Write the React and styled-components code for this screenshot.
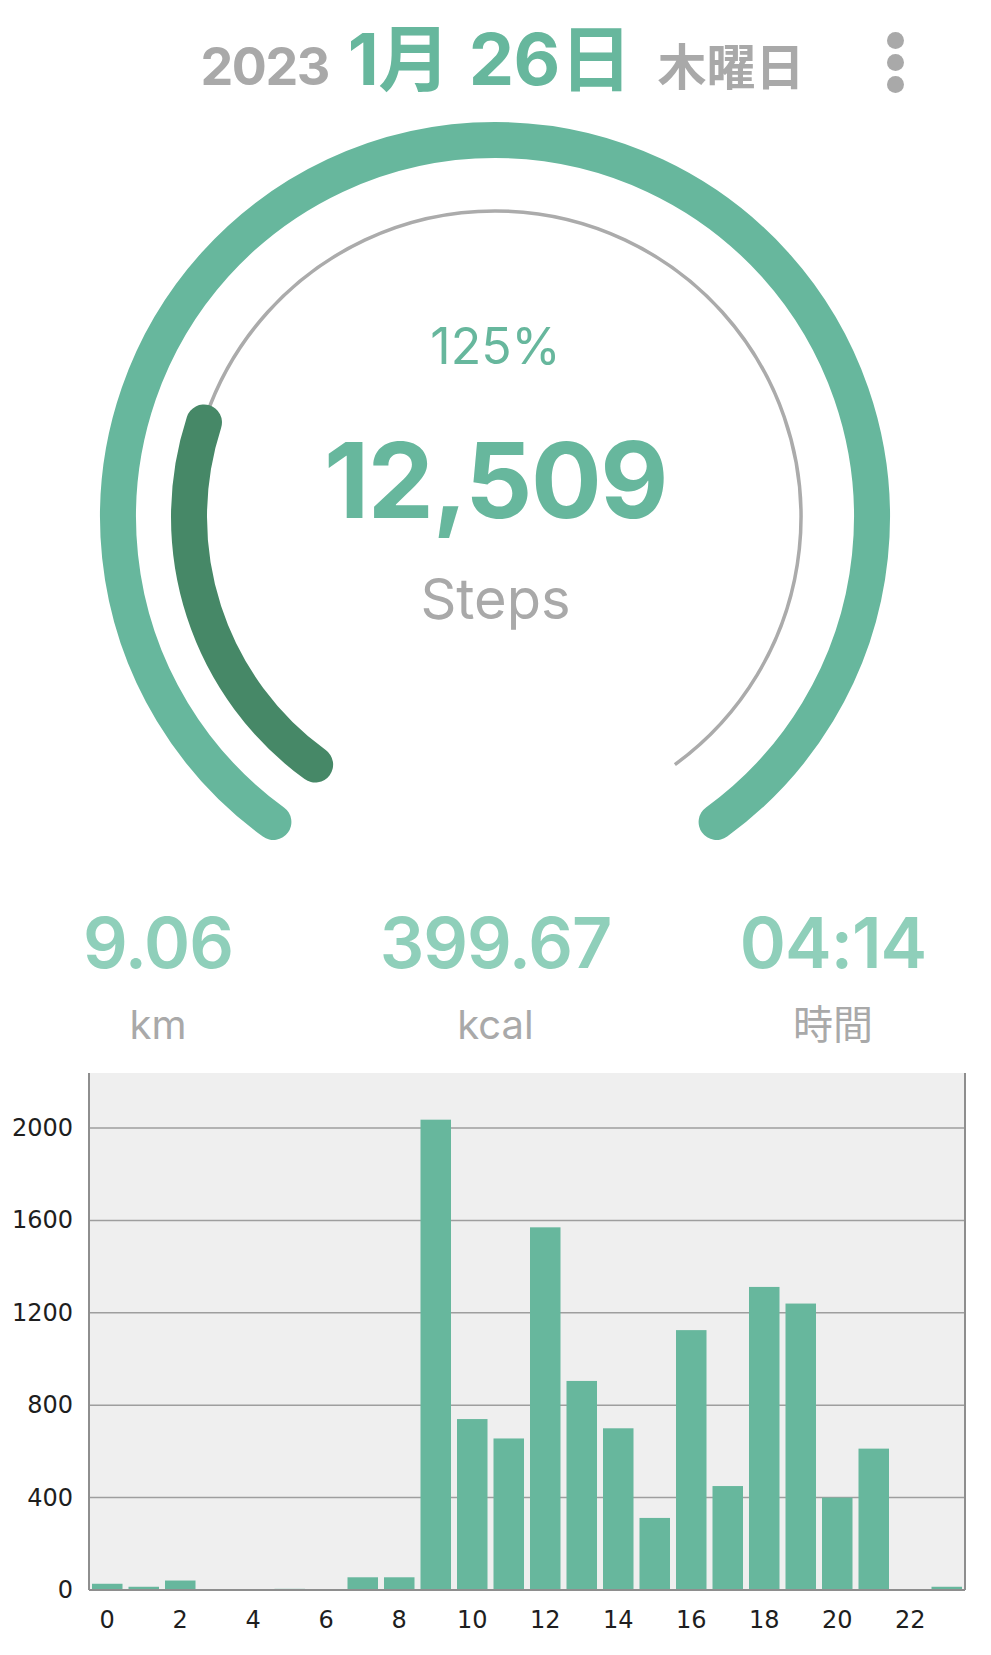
import React from 'react';
import styled, { createGlobalStyle } from 'styled-components';

const GlobalStyle = createGlobalStyle`
  html, body {
    margin: 0;
    padding: 0;
    background: #ffffff;
  }
  body {
    font-family: Inter, "Noto Sans", "Noto Sans CJK JP", sans-serif;
  }
`;

const GREEN = '#67b79d';
const DARK_GREEN = '#468867';
const LIGHT_GREEN = '#8fcfba';
const GRAY = '#a9a9a9';

const Page = styled.div`
  width: 991px;
  height: 1655px;
  overflow: hidden;
  display: flex;
  flex-direction: column;
`;

// ---------- header ----------
const Header = styled.header`
  height: 110px;
  display: grid;
  grid-template-columns: 1fr auto 1fr;
  align-items: start;
`;

const DateLine = styled.div`
  grid-column: 2;
  padding: 23px 0 0 14px;
  display: flex;
  align-items: baseline;
  gap: 19px;
  line-height: 1;
  white-space: nowrap;
`;

const DatePart = styled.span`
  font-family: Inter, "Noto Sans CJK JP", sans-serif;
  font-weight: 700;
  font-size: ${(p) => p.$size}px;
  color: ${(p) => (p.$accent ? GREEN : GRAY)};
  letter-spacing: ${(p) => p.$tracking || 0}px;
`;

const Weekday = styled.span`
  font-family: "Noto Sans CJK JP", sans-serif;
  font-weight: 700;
  font-size: 49px;
  color: ${GRAY};
  margin-left: 7px;
`;

const MenuButton = styled.button`
  grid-column: 3;
  justify-self: end;
  margin: 32px 87px 0 0;
  padding: 0;
  border: none;
  background: none;
  display: flex;
  flex-direction: column;
  gap: 5px;
  cursor: pointer;
`;

const Dot = styled.span`
  width: 17px;
  height: 17px;
  border-radius: 50%;
  background: ${GRAY};
`;

// ---------- gauge ----------
const GaugeWrap = styled.section`
  height: 760px;
  display: grid;
  & > * {
    grid-area: 1 / 1;
  }
`;

const GaugeText = styled.div`
  display: flex;
  flex-direction: column;
  align-items: center;
  padding-top: 211px;
  line-height: 1;
`;

const Percent = styled.div`
  font-size: 50px;
  font-weight: 400;
  color: ${GREEN};
`;

const StepCount = styled.div`
  margin-top: 56px;
  font-size: 105px;
  font-weight: 700;
  color: ${GREEN};
  letter-spacing: -1.5px;
`;

const StepLabel = styled.div`
  margin-top: 39px;
  font-size: 56px;
  font-weight: 400;
  color: ${GRAY};
`;

// ---------- stats ----------
const Stats = styled.section`
  height: 190px;
  display: grid;
  grid-template-columns: repeat(3, 300px);
  column-gap: 37.5px;
  justify-content: center;
  align-content: start;
  padding-top: 38px;
  box-sizing: border-box;
`;

const Stat = styled.div`
  display: flex;
  flex-direction: column;
  align-items: center;
  line-height: 1;
`;

const StatValue = styled.div`
  font-size: 70px;
  font-weight: 600;
  color: ${LIGHT_GREEN};
  letter-spacing: -1px;
`;

const StatLabel = styled.div`
  margin-top: 27px;
  font-family: Inter, "Noto Sans CJK JP", sans-serif;
  font-size: 40px;
  font-weight: 400;
  color: ${GRAY};
`;

// ---------- chart ----------
const ChartSvg = styled.svg`
  display: block;
  width: 991px;
  height: 595px;
`;

const AxisText = styled.text`
  font-family: "DejaVu Sans", sans-serif;
  font-size: 24px;
  fill: #1e1e1e;
`;

const hourly = [
  27, 14, 41, 0, 0, 5, 0, 55, 55, 2036, 740, 656, 1570, 905, 700, 312,
  1125, 450, 1312, 1240, 400, 612, 0, 14,
];

const cx = 495;
const cy = 407;

const point = (r, deg) => {
  const a = (deg * Math.PI) / 180;
  return [cx + r * Math.cos(a), cy + r * Math.sin(a)];
};

const arcPath = (r, from, to) => {
  const [x1, y1] = point(r, from);
  const [x2, y2] = point(r, to);
  const large = to - from > 180 ? 1 : 0;
  return `M ${x1} ${y1} A ${r} ${r} 0 ${large} 1 ${x2} ${y2}`;
};

function Gauge({ percent }) {
  const start = 126;
  const sweep = 288;
  const over = Math.max(0, percent - 100) / 100;
  return (
    <svg width="991" height="760" viewBox="0 0 991 760">
      <path d={arcPath(377, start, start + sweep)} fill="none" stroke={GREEN} strokeWidth="36" strokeLinecap="round" />
      <path d={arcPath(306, start, start + sweep)} fill="none" stroke="#ababab" strokeWidth="3.5" />
      <path d={arcPath(306, start, start + sweep * over)} fill="none" stroke={DARK_GREEN} strokeWidth="36" strokeLinecap="round" />
    </svg>
  );
}

function HourlyChart({ data }) {
  const left = 89;
  const right = 965;
  const top = 13;
  const base = 530;
  const perUnit = 0.231;
  const slot = (right - left) / data.length;
  const ticks = [0, 400, 800, 1200, 1600, 2000];
  return (
    <ChartSvg viewBox="0 0 991 595">
      <rect x={left} y={top} width={right - left} height={base - top} fill="#efefef" />
      {ticks.slice(1).map((t) => (
        <line key={t} x1={left} x2={right} y1={base - t * perUnit} y2={base - t * perUnit} stroke="#9e9e9e" strokeWidth="1.5" />
      ))}
      {data.map((v, i) => (
        <rect key={i} x={left + i * slot + 3} y={base - v * perUnit} width={slot - 6} height={v * perUnit} fill={GREEN} />
      ))}
      <line x1={left} x2={left} y1={top} y2={base} stroke="#8e8e8e" strokeWidth="2" />
      <line x1={right} x2={right} y1={top} y2={base} stroke="#8e8e8e" strokeWidth="2" />
      <line x1={left} x2={right} y1={base} y2={base} stroke="#8e8e8e" strokeWidth="2" />
      {ticks.map((t) => (
        <AxisText key={t} x="73" y={base - t * perUnit} textAnchor="end" dominantBaseline="central">
          {t}
        </AxisText>
      ))}
      {data.map((_, i) =>
        i % 2 === 0 ? (
          <AxisText key={i} x={left + i * slot + slot / 2} y="560" textAnchor="middle" dominantBaseline="central">
            {i}
          </AxisText>
        ) : null
      )}
    </ChartSvg>
  );
}

const stats = [
  { value: '9.06', label: 'km' },
  { value: '399.67', label: 'kcal' },
  { value: '04:14', label: '時間' },
];

function App() {
  return (
    <Page>
      <GlobalStyle />
      <Header>
        <DateLine>
          <DatePart $size={52} $tracking={-1.5}>2023</DatePart>
          <DatePart $size={72} $tracking={-0.5} $accent>1月</DatePart>
          <DatePart $size={72} $tracking={-0.5} $accent>26日</DatePart>
          <Weekday>木曜日</Weekday>
        </DateLine>
        <MenuButton aria-label="menu">
          <Dot />
          <Dot />
          <Dot />
        </MenuButton>
      </Header>

      <GaugeWrap>
        <Gauge percent={125} />
        <GaugeText>
          <Percent>125%</Percent>
          <StepCount>12,509</StepCount>
          <StepLabel>Steps</StepLabel>
        </GaugeText>
      </GaugeWrap>

      <Stats>
        {stats.map((s) => (
          <Stat key={s.label}>
            <StatValue>{s.value}</StatValue>
            <StatLabel>{s.label}</StatLabel>
          </Stat>
        ))}
      </Stats>

      <HourlyChart data={hourly} />
    </Page>
  );
}

export default App;
